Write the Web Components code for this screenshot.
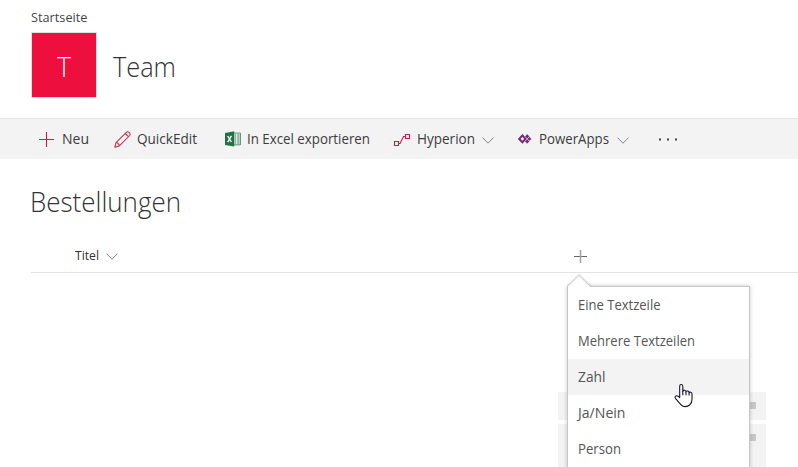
<!DOCTYPE html>
<html lang="de">
<head>
<meta charset="utf-8">
<title>Team – Bestellungen</title>
<style>
html,body{margin:0;height:467px;overflow:hidden;background:#fff}
body{font-family:"Open Sans","Noto Sans",sans-serif;color:#444;font-size:14px}
</style>
</head>
<body>
<team-page></team-page>
<script>
function define(name, html, connected){
  const t=document.createElement('template'); t.innerHTML=html;
  customElements.define(name, class extends HTMLElement{
    constructor(){super();this.attachShadow({mode:'open'}).append(t.content.cloneNode(true));}
    connectedCallback(){ if(connected) connected.call(this); }
  });
}

/* Single-line label; "w" is its width, reached by condensing the glyphs. */
define('text-label', `<style>:host{display:block;white-space:nowrap;flex:none}span{display:inline-block;transform-origin:0 50%}</style><span></span>`, function(){
  const s=this.shadowRoot.querySelector('span'), text=this.getAttribute('text'), w=+this.getAttribute('w');
  s.textContent=text;
  this.style.width=w+'px';
  s.style.transform=`scaleX(${(w/s.getBoundingClientRect().width).toFixed(4)})`;
});

const icons={
  plus:[15,15,'<path d="M0 7.5H15M7.5 0V15" stroke="#c4214a" stroke-width="1.1"/>'],
  pencil:[17,17,'<g fill="none" stroke="#d0284e" stroke-width="1.05" stroke-linejoin="round"><path d="M.8 16.2 2 11.6 12.4 1.3Q13.5.2 14.7 1.1L15.8 2.2Q16.7 3.4 15.7 4.5L5.3 14.9Z"/><path d="M2 11.6 3.8 12 4.1 13 5 13.4 5.3 14.9M11.2 2.5 14.5 5.7"/></g>'],
  excel:[16,16,'<path d="M8 2.1H15.4V13.8H8Z" fill="#fff" stroke="#217346" stroke-width=".8"/><path d="M9.5 4H11.3M12.2 4H14.5M9.5 6H11.3M12.2 6H14.5M9.5 8H11.3M12.2 8H14.5M9.5 10H11.3M12.2 10H14.5M9.5 12H11.3M12.2 12H14.5" stroke="#217346" stroke-width="1.1"/><path d="M0 2 9.2.3V15.6L0 14Z" fill="#217346"/><path d="M2.7 5 6.4 11M6.4 4.8 2.7 11.1" stroke="#fff" stroke-width="1.4"/>'],
  flow:[17,13,'<g fill="none" stroke="#c4214a" stroke-width="1.1"><path d="M1.5 8.5H5.5V12.5H1.5ZM12.5 1.5H16.5V5.5H12.5ZM5.5 10.5H7L10.5 3.5H12.5"/></g>'],
  apps:[14,10,'<g fill="none" stroke="#742774"><path d="M4.4 1.5 7.6 4.9 4.4 8.3 1.2 4.9Z" stroke-width="2"/><path d="M6.9 2.4 9.2.1 11.5 2.4 9.2 4.7ZM6.9 7.4 9.2 5.1 11.5 7.4 9.2 9.7ZM9.2 4.9 11.4 2.7 13.6 4.9 11.4 7.1Z" fill="#742774" stroke="#f3f3f3" stroke-width=".4"/></g>'],
  chevron:[12,7,'<path d="M.5.6 6 6.2 11.5.6" fill="none" stroke="#858585" stroke-width="1"/>'],
  add:[13,13,'<path d="M0 6.5H13" stroke="#686868"/><path d="M6.5 0V13" stroke="#a6a6a6" stroke-width="1.6"/>'],
  more:[18,3,'<path d="M0 .5h2v2H0zM8 .5h2v2H8zM16 .5h2v2H16z" fill="#444"/>'],
  hand:[20,25,'<path d="M5.7 14.7V3.2Q5.7 1.5 7.2 1.5T8.8 3.2V8.4Q9.2 7 10.6 7.2T12 8.9Q12.4 7.7 13.8 8T15.1 9.8Q15.4 8.9 16.7 9.2T18 11.3V16.5Q18 20.2 15.6 22Q13.9 23.6 11.3 23.6T7.1 21.8L1.4 15.3Q.6 14.2 1.4 13.3 2.8 12.2 4.1 13.2Z" fill="#fff" stroke="#15152a" stroke-width="1.1" stroke-linejoin="round"/><path d="M8.8 8V12.3M12 8.9V12.3M15.1 9.8V12.5" stroke="#15152a" stroke-width="1.1"/>']
};
define('line-icon','<style>:host{display:block;flex:none}svg{display:block;overflow:visible}</style><div></div>',function(){
  const [w,h,b]=icons[this.getAttribute('name')];
  this.shadowRoot.querySelector('div').innerHTML=`<svg width="${w}" height="${h}" viewBox="0 0 ${w} ${h}">${b}</svg>`;
});

define('site-header',`<style>
:host{display:block;box-sizing:border-box;height:118px;padding:8px 0 0 31px}
.crumb{font-size:13px;line-height:18px;height:24px}
.row{display:flex;align-items:center;gap:16px;height:66px}
.logo{width:64px;height:64px;border:1px solid #e0e0e0;background:#ed0f3d;display:flex;justify-content:center;color:#fff;font:300 28px/66px "Open Sans"}
.name{font:300 28px/38px "Open Sans";color:#333;padding-top:2px}
</style>
<text-label class="crumb" text="Startseite" w="56.5"></text-label>
<div class="row"><div class="logo"><text-label text="T" w="14"></text-label></div><text-label class="name" text="Team" w="63"></text-label></div>`);

define('command-item',`<style>:host{display:flex;align-items:center;height:40px;flex:none;line-height:20px}</style><slot></slot>`);
define('command-bar',`<style>
:host{display:flex;box-sizing:border-box;height:41px;border-top:1px solid #e6e6e6;background:#f3f3f3;padding-left:39px;color:#3c3c3c}
.i1{width:75px;gap:8px}.i2{width:111px;gap:6px}.i3{width:168px;gap:6px}.i4{width:125px}.i5{width:141px}
.i4 text-label{margin:0 7px}.i5 text-label{margin:0 8px 0 7px}
.down{padding-top:3px}
</style>
<command-item class="i1"><line-icon name="plus"></line-icon><text-label text="Neu" w="27"></text-label></command-item>
<command-item class="i2"><line-icon name="pencil"></line-icon><text-label text="QuickEdit" w="60"></text-label></command-item>
<command-item class="i3"><line-icon name="excel"></line-icon><text-label text="In Excel exportieren" w="123"></text-label></command-item>
<command-item class="i4"><line-icon name="flow"></line-icon><text-label text="Hyperion" w="58"></text-label><line-icon class="down" name="chevron"></line-icon></command-item>
<command-item class="i5"><line-icon name="apps"></line-icon><text-label text="PowerApps" w="70"></text-label><line-icon class="down" name="chevron"></line-icon></command-item>
<command-item><line-icon name="more"></line-icon></command-item>`);

define('list-view',`<style>
:host{display:block;padding-left:30px}
.title{font:300 28px/38px "Open Sans";color:#333;padding-top:23px;height:57px}
.head{display:flex;align-items:center;height:33px;border-bottom:1px solid #e3e3e3;margin-left:1px;padding-left:43.5px;font-size:12px;color:#303030}
.sort{margin-left:7px;padding-top:2px}
.add{margin-left:456.5px;padding-top:1px}
</style>
<text-label class="title" text="Bestellungen" w="151"></text-label>
<div class="head"><text-label text="Titel" w="24"></text-label><line-icon class="sort" name="chevron"></line-icon><line-icon class="add" name="add"></line-icon></div>`);

/* Empty-list illustration behind the open menu. */
define('ghost-rows',`<style>
:host{position:absolute;left:558px;top:392px;width:208px;height:75px;display:flex;flex-direction:column;gap:4px}
div{height:28px;background:#f3f3f3;display:flex;justify-content:flex-end;align-items:flex-start;padding:10px 10px 0 0;box-sizing:border-box}
div:last-child{height:43px}
i{width:20px;height:7px;background:#c9c9c9}
</style><div><i></i></div><div><i></i></div>`);

define('menu-item',`<style>:host{display:flex;height:36px;align-items:center;padding-left:9.5px;line-height:20px;color:#555}:host([active]){background:#f3f3f3}</style><slot></slot>`);
define('column-menu',`<style>
:host{position:absolute;left:568px;top:287px;width:181px;height:190px;background:#fff;box-shadow:0 0 0 1px #c7c7c7,0 0 4px 1px rgba(0,0,0,.22)}
svg{position:absolute;left:-2px;top:-14px;overflow:visible}
.hand{position:absolute;left:106px;top:96px}
</style>
<svg width="28" height="15"><path d="M2 14 13 3 24.5 14" fill="none" stroke="#000" stroke-opacity=".09" stroke-width="4"/><path d="M2 15V13L13 2.5 24.5 14V15Z" fill="#fff"/><path d="M1.5 13.5 13 2.5 24.5 13.5" fill="none" stroke="#cecece"/></svg>
<menu-item><text-label text="Eine Textzeile" w="82.5"></text-label></menu-item>
<menu-item><text-label text="Mehrere Textzeilen" w="117"></text-label></menu-item>
<menu-item active><text-label text="Zahl" w="27.5"></text-label></menu-item>
<menu-item><text-label text="Ja/Nein" w="47.5"></text-label></menu-item>
<menu-item><text-label text="Person" w="43"></text-label></menu-item>
<line-icon class="hand" name="hand"></line-icon>`);

define('team-page',`<style>:host{display:block;position:relative;width:798px;height:467px;overflow:hidden;background:#fff}</style>
<site-header></site-header><command-bar></command-bar><list-view></list-view><ghost-rows></ghost-rows><column-menu></column-menu>`);
</script>
</body>
</html>
